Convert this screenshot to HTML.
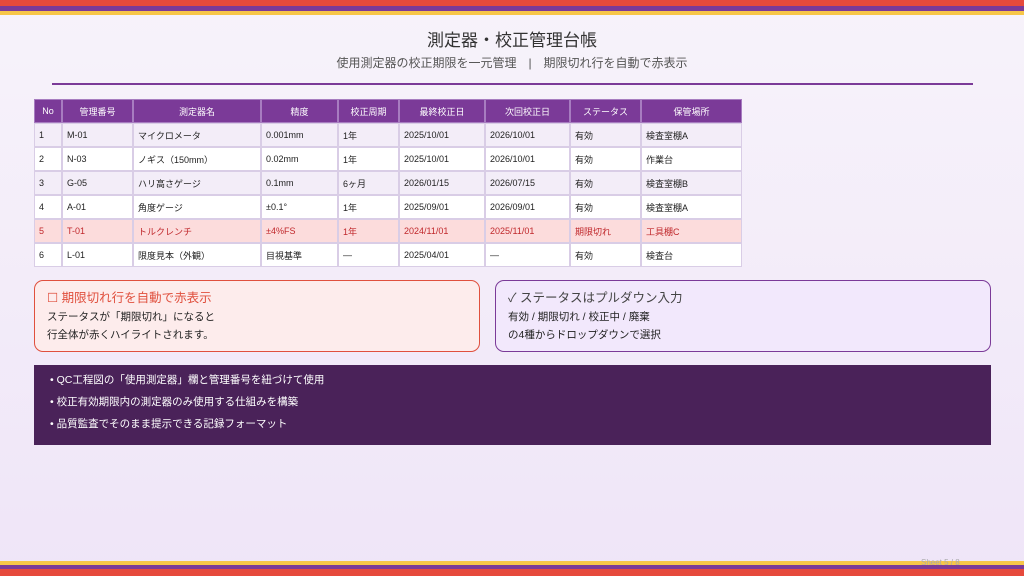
<!DOCTYPE html><html><head><meta charset="utf-8"><style>
*{margin:0;padding:0;box-sizing:border-box}
body{width:1024px;height:576px;overflow:hidden;position:relative;background:linear-gradient(#f7f3fa,#efe5f8);font-family:"Liberation Sans","Noto Sans CJK JP",sans-serif;color:#222}
.a{position:absolute}
table{position:absolute;left:34px;top:99px;border-collapse:separate;border-spacing:0;font-size:9px}
td,th{height:24px;border:1px solid #d9cde6;padding:0 4px;text-align:left;white-space:nowrap}
th{background:#7b3a98;color:#fff;font-weight:normal;text-align:center;border-color:#a77cc0}
tr:nth-child(even) td{background:#f3edf8}
tr:nth-child(odd) td{background:#fff}
tr.r td{background:#fcdcdc;color:#c0282c}
</style></head><body>
<div class="a" style="left:0;top:0;width:1024px;height:6px;background:#e64a3c"></div>
<div class="a" style="left:0;top:6px;width:1024px;height:5px;background:#7b3a98"></div>
<div class="a" style="left:0;top:11px;width:1024px;height:4px;background:#f7c648"></div>
<div class="a" style="left:0;top:561px;width:1024px;height:4px;background:#f7c648"></div>
<div class="a" style="left:0;top:565px;width:1024px;height:4px;background:#7b3a98"></div>
<div class="a" style="left:0;top:569px;width:1024px;height:7px;background:#e64a3c"></div>
<div class="a" style="left:0;top:26px;width:1024px;text-align:center;font-size:17px;color:#333">測定器・校正管理台帳</div>
<div class="a" style="left:0;top:54px;width:1024px;text-align:center;font-size:12px;color:#555">使用測定器の校正期限を一元管理　|　期限切れ行を自動で赤表示</div>
<div class="a" style="left:52px;top:83px;width:921px;height:2px;background:#7b3a98"></div>
<table>
<tr><th style="width:28px">No</th><th style="width:71px">管理番号</th><th style="width:128px">測定器名</th><th style="width:77px">精度</th><th style="width:61px">校正周期</th><th style="width:86px">最終校正日</th><th style="width:85px">次回校正日</th><th style="width:71px">ステータス</th><th style="width:101px">保管場所</th></tr>
<tr><td>1</td><td>M-01</td><td>マイクロメータ</td><td>0.001mm</td><td>1年</td><td>2025/10/01</td><td>2026/10/01</td><td>有効</td><td>検査室棚A</td></tr>
<tr><td>2</td><td>N-03</td><td>ノギス（150mm）</td><td>0.02mm</td><td>1年</td><td>2025/10/01</td><td>2026/10/01</td><td>有効</td><td>作業台</td></tr>
<tr><td>3</td><td>G-05</td><td>ハリ高さゲージ</td><td>0.1mm</td><td>6ヶ月</td><td>2026/01/15</td><td>2026/07/15</td><td>有効</td><td>検査室棚B</td></tr>
<tr><td>4</td><td>A-01</td><td>角度ゲージ</td><td>±0.1°</td><td>1年</td><td>2025/09/01</td><td>2026/09/01</td><td>有効</td><td>検査室棚A</td></tr>
<tr class="r"><td>5</td><td>T-01</td><td>トルクレンチ</td><td>±4%FS</td><td>1年</td><td>2024/11/01</td><td>2025/11/01</td><td>期限切れ</td><td>工具棚C</td></tr>
<tr><td>6</td><td>L-01</td><td>限度見本（外観）</td><td>目視基準</td><td>—</td><td>2025/04/01</td><td>—</td><td>有効</td><td>検査台</td></tr>
</table>
<div class="a" style="left:34px;top:280px;width:446px;height:72px;border:1.5px solid #e0503e;border-radius:9px;background:#fdecec;padding:8px 12px">
<div style="font-size:12.5px;color:#e0503e;line-height:18px">☐ 期限切れ行を自動で赤表示</div>
<div style="font-size:10.5px;line-height:18px;margin-top:1px">ステータスが「期限切れ」になると<br>行全体が赤くハイライトされます。</div></div>
<div class="a" style="left:495px;top:280px;width:496px;height:72px;border:1.5px solid #7b3a98;border-radius:9px;background:#f2e8fc;padding:8px 12px">
<div style="font-size:12.5px;color:#444;line-height:18px">✓ ステータスはプルダウン入力</div>
<div style="font-size:10.5px;line-height:18px;margin-top:1px">有効 / 期限切れ / 校正中 / 廃棄<br>の4種からドロップダウンで選択</div></div>
<div class="a" style="left:34px;top:365px;width:957px;height:80px;background:#4a2259;color:#fff;font-size:10.5px;line-height:22px;padding:4px 16px">
• QC工程図の「使用測定器」欄と管理番号を紐づけて使用<br>• 校正有効期限内の測定器のみ使用する仕組みを構築<br>• 品質監査でそのまま提示できる記録フォーマット</div>
<div class="a" style="left:921px;top:558px;font-size:8px;color:#aaa">Sheet 5 / 8</div>
</body></html>
